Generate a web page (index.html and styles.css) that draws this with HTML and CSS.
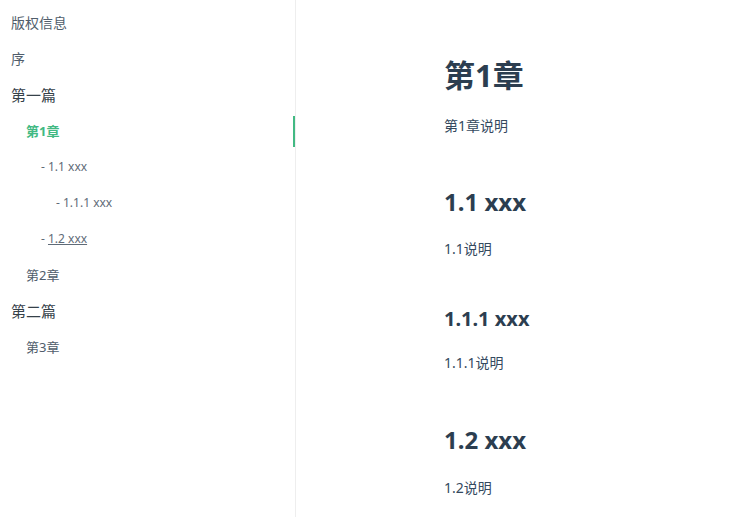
FILE: index.html
```html
<!DOCTYPE html>
<html lang="zh">
<head>
<meta charset="utf-8">
<title>docs</title>
<link rel="stylesheet" href="styles.css">
</head>
<body>
<div class="app">
  <aside class="sidebar">
    <ul class="nav">
      <li class="item lvl0">版权信息</li>
      <li class="item lvl0">序</li>
      <li class="item lvl0 part">第一篇</li>
      <li class="item lvl1 active">第1章</li>
      <li class="item lvl2 sub">- 1.1 xxx</li>
      <li class="item lvl3 sub">- 1.1.1 xxx</li>
      <li class="item lvl2 sub">- <span class="u">1.2 xxx</span></li>
      <li class="item lvl1">第2章</li>
      <li class="item lvl0 part">第二篇</li>
      <li class="item lvl1">第3章</li>
    </ul>
  </aside>
  <main class="content">
    <section class="markdown">
      <h1 class="h1">第1章</h1>
      <p class="p p1">第1章说明</p>
      <h2 class="h2 h2a">1.1 xxx</h2>
      <p class="p p2">1.1说明</p>
      <h3 class="h3">1.1.1 xxx</h3>
      <p class="p p3">1.1.1说明</p>
      <h2 class="h2 h2b">1.2 xxx</h2>
      <p class="p p4">1.2说明</p>
    </section>
  </main>
</div>
</body>
</html>
```
FILE: styles.css
```css
html, body {
  margin: 0;
  padding: 0;
  background: #fff;
}
body {
  font-family: "Noto Sans", "Noto Sans CJK SC", sans-serif;
  -webkit-font-smoothing: antialiased;
}
.app {
  display: flex;
  min-height: 517px;
}
.sidebar {
  width: 295px;
  flex: 0 0 295px;
  border-right: 1px solid #eeeeee;
  min-height: 517px;
}
.nav {
  list-style: none;
  margin: 0;
  padding: 5px 0 0 0;
}
.item {
  height: 36px;
  line-height: 36px;
  font-size: 14px;
  color: #505d6b;
  white-space: nowrap;
}
.lvl0 { padding-left: 11px; }
.lvl1 { padding-left: 26px; font-size: 13px; }
.lvl2 { padding-left: 41px; }
.lvl3 { padding-left: 56px; }
.part {
  font-size: 15px;
  color: #364149;
}
.sub {
  font-size: 12px;
  color: #5f6b78;
}
.u {
  text-decoration: underline;
}
.active {
  height: 31px;
  line-height: 31px;
  margin-top: 3px;
  margin-bottom: 2px;
  color: #42b983;
  font-weight: 700;
  border-right: 2px solid #42b983;
}
.content {
  flex: 1;
  padding-left: 148px;
}
.markdown {
  color: #34495e;
}
.h1, .h2, .h3 {
  margin: 0;
  color: #2c3e50;
  font-weight: 700;
}
.h1 {
  font-size: 31px;
  line-height: 40px;
  margin-top: 55px;
}
.h2 {
  font-size: 24px;
  line-height: 36px;
}
.h3 {
  font-size: 20px;
  line-height: 30px;
  margin-top: 43px;
}
.p {
  margin: 0;
  font-size: 14px;
  line-height: 24px;
}
.p1 { margin-top: 19px; }
.h2a { margin-top: 46px; }
.p2 { margin-top: 17px; }
.p3 { margin-top: 17px; }
.h2b { margin-top: 47px; }
.p4 { margin-top: 18px; }
```
